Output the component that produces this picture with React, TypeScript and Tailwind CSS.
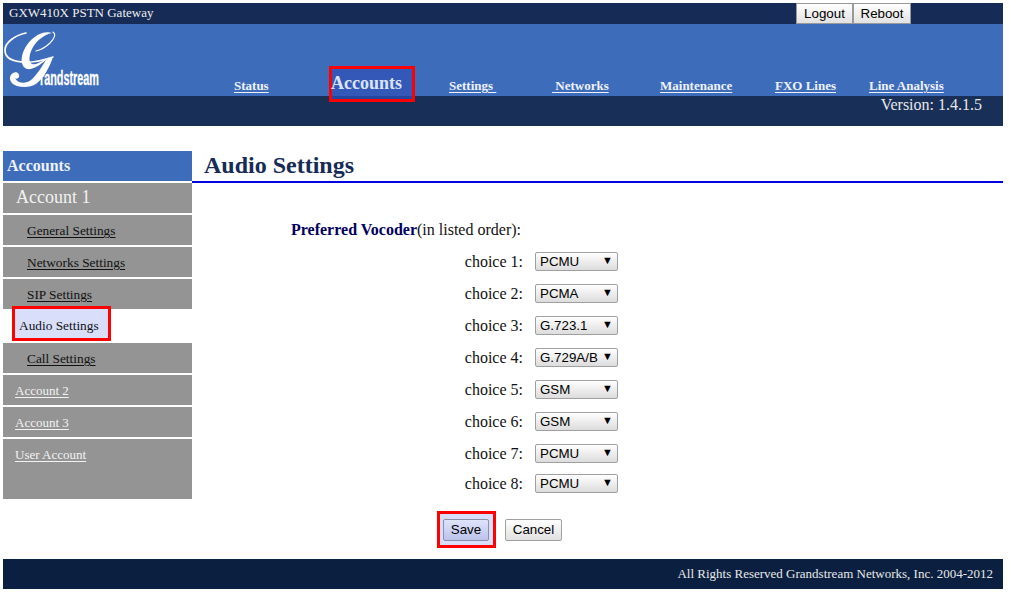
const navItems = [
  { label: "Status", width: "w-[95px]" },
  { label: "Accounts", width: "w-[120px]", active: true },
  { label: "Settings\u00a0", width: "w-[103px]" },
  { label: "\u00a0Networks", width: "w-[108px]" },
  { label: "Maintenance", width: "w-[115px]" },
  { label: "FXO Lines", width: "w-[94px]" },
  { label: "Line Analysis", width: "w-[100px]" },
];

const choices = [
  { n: 1, value: "PCMU" },
  { n: 2, value: "PCMA" },
  { n: 3, value: "G.723.1" },
  { n: 4, value: "G.729A/B" },
  { n: 5, value: "GSM" },
  { n: 6, value: "GSM" },
  { n: 7, value: "PCMU" },
  { n: 8, value: "PCMU" },
];

const sans = "font-['Liberation_Sans',Arial,sans-serif]";

function Logo() {
  return (
    <svg width="180" height="72" viewBox="3 24 180 72" className="shrink-0">
      {/* G swirl, in page coordinates */}
      <g fill="none" stroke="#fff" strokeLinecap="round">
        <path d="M26 33 C16 35 5 42 5 50 C5 58 12 62 26 62" strokeWidth="1.7" />
        <path d="M53 32 C56 34 55 38 50 43 C46 47 40 50 36 51" strokeWidth="1.1" />
        <path d="M26 62 C34 63 44 60 53 57" strokeWidth="1.4" />
      </g>
      <g fill="#fff">
        <path d="M52 33 C42 30 30 38 24 50 C20 59 21 67 27 69 C33 70 40 65 46 60 L45 59 C40 63 35 65 32 64 C28 62 29 54 33 47 C38 39 46 34 52 33 Z" />
        <path d="M53 57 C50 66 44 78 36 84 C30 88 18 88 13 84 C9 81 9 75 13 73 C17 71 20 74 19 77 C18 79 16 79 15 78 C18 84 26 84 31 80 C37 75 42 66 46 60 Z" />
      </g>
      <text
        x="40"
        y="85"
        textLength="59"
        lengthAdjust="spacingAndGlyphs"
        fill="#fff"
        stroke="#fff"
        strokeWidth="0.3"
        fontFamily="'Liberation Sans', Arial, sans-serif"
        fontWeight="700"
        fontSize="21"
      >
        randstream
      </text>
    </svg>
  );
}

function SideLink({ label, className = "" }: { label: string; className?: string }) {
  return (
    <div className={`h-[30px] bg-[#949494] mb-[2px] leading-[32px] ${className}`}>
      <span className="underline underline-offset-2">{label}</span>
    </div>
  );
}

function Choice({ n, value, className = "" }: { n: number; value: string; className?: string }) {
  return (
    <div className={`flex items-center h-[19px] ${className}`}>
      <span className="w-[243px] pr-[12px] text-right text-[16px] text-[#111]">choice {n}:</span>
      <div className="relative w-[83px] h-[19px]">
        <select
          defaultValue={value}
          className={`appearance-none block w-full h-full pl-[4px] rounded-[2px] border border-[#a0a0a0] bg-gradient-to-b from-white to-[#dcdcdc] text-[13.33px] leading-[15px] text-black ${sans}`}
        >
          <option>{value}</option>
        </select>
        <span className={`absolute right-[5px] top-[0px] text-[11px] leading-[16px] text-black pointer-events-none ${sans}`}>▼</span>
      </div>
    </div>
  );
}

export default function App() {
  return (
    <div className="w-[1009px] h-[594px] overflow-hidden bg-white pt-[3px] pl-[3px] pr-[6px] font-['Liberation_Serif','Times_New_Roman',serif]">
      {/* Header */}
      <header>
        <div className="h-[21px] bg-[#162c57] flex text-[13px] text-[#eeeeee]">
          <span className="pl-[6px] leading-[20px]">GXW410X PSTN Gateway</span>
          <div className={`ml-auto mr-[92px] flex text-[13.33px] text-black ${sans}`}>
            <button className="w-[57px] h-[21px] border border-[#999] bg-gradient-to-b from-white to-[#e2e2e2]">Logout</button>
            <button className="w-[58px] h-[21px] border border-[#999] bg-gradient-to-b from-white to-[#e2e2e2]">Reboot</button>
          </div>
        </div>
        <div className="h-[72px] bg-[#3d6cbb] flex">
          <div className="w-[231px] shrink-0">
            <Logo />
          </div>
          <nav className="flex items-end text-[13px] font-bold text-[#eef1fa]">
            {navItems.map((item) =>
              item.active ? (
                <div key={item.label} className={`${item.width} shrink-0 self-end -mb-[6px] relative z-10`}>
                  <div className="w-[86px] h-[36px] border-[3px] border-[#ff0000] bg-[linear-gradient(#3358b8_0,#3358b8_27px,#26459c_27px)] text-[18px] leading-[28px] text-[#dbe4f7] -indent-[1px]">
                    Accounts
                  </div>
                </div>
              ) : (
                <div key={item.label} className={`${item.width} shrink-0 pb-[3px] leading-[14px]`}>
                  <span className="underline underline-offset-2">{item.label}</span>
                </div>
              ),
            )}
          </nav>
        </div>
        <div className="h-[30px] bg-[#182f58] text-right pr-[21px] text-[16px] leading-[17px] text-[#e8e8e8]">
          Version: 1.4.1.5
        </div>
      </header>

      <div className="flex mt-[25px]">
        {/* Sidebar */}
        <aside className="w-[189px] shrink-0">
          <div className="h-[30px] bg-[#3d6cbb] mb-[2px] pl-[4px] text-[16px] font-bold leading-[30px] text-[#eef1fa]">Accounts</div>
          <div className="h-[30px] bg-[#949494] mb-[2px] pl-[13px] text-[18px] leading-[28px] text-[#f2f2f2]">Account 1</div>
          <SideLink label="General Settings" className="pl-[24px] text-[13.33px] text-[#111]" />
          <SideLink label="Networks Settings" className="pl-[24px] text-[13.33px] text-[#111]" />
          <div className="h-[30px] bg-[#949494] pl-[24px] text-[13.33px] leading-[32px] text-[#111]">
            <span className="underline underline-offset-2">SIP Settings</span>
          </div>
          <div className="h-[34px] pl-[9px] relative">
            <div className="absolute top-[-3px] w-[99px] h-[35px] border-[3px] border-[#ff0000] bg-[#d9dffb] pl-[4px] text-[13.33px] leading-[33px] text-[#111]">
              Audio Settings
            </div>
          </div>
          <SideLink label="Call Settings" className="pl-[24px] text-[13.33px] text-[#111]" />
          <SideLink label="Account 2" className="pl-[12px] text-[13px] text-[#f2f2f2]" />
          <SideLink label="Account 3" className="pl-[12px] text-[13px] text-[#f2f2f2]" />
          <div className="h-[60px] bg-[#949494] pl-[12px] text-[13px] leading-[32px] text-[#f2f2f2]">
            <span className="underline underline-offset-2">User Account</span>
          </div>
        </aside>

        {/* Main */}
        <main className="flex-1">
          <h1 className="h-[32px] border-b-2 border-[#0000e0] pl-[12px] text-[24px] font-bold leading-[29px] text-[#162c57]">Audio Settings</h1>
          <div className="pl-[99px] pt-[37px] pb-[12px] text-[16px] leading-[20px] text-[#111]">
            <b className="text-[#000060]">Preferred Vocoder</b>(in listed order):
          </div>
          <div className="flex flex-col gap-[13px] pl-[100px]">
            {choices.map((c) => (
              <Choice key={c.n} n={c.n} value={c.value} className={c.n === 8 ? "-mt-[2px]" : ""} />
            ))}
          </div>
          <div className={`flex items-center mt-[18px] pl-[245px] text-[13.33px] text-black ${sans}`}>
            <div className="w-[59px] h-[37px] border-[3px] border-[#ff0000] bg-[#d9dffb] flex items-center pl-[3px]">
              <button className="w-[46px] h-[22px] rounded-[2px] border border-[#8a8fa8] bg-gradient-to-b from-[#dfe3fb] to-[#bcc3ea]">Save</button>
            </div>
            <button className="ml-[9px] w-[57px] h-[22px] rounded-[2px] border border-[#a0a0a0] bg-gradient-to-b from-white to-[#e0e0e0]">Cancel</button>
          </div>
        </main>
      </div>

      {/* Footer */}
      <footer className="mt-[11px] h-[30px] bg-[#0b2040] pr-[10px] text-right text-[13px] leading-[30px] text-[#e8e8e8]">
        All Rights Reserved Grandstream Networks, Inc. 2004-2012
      </footer>
    </div>
  );
}
